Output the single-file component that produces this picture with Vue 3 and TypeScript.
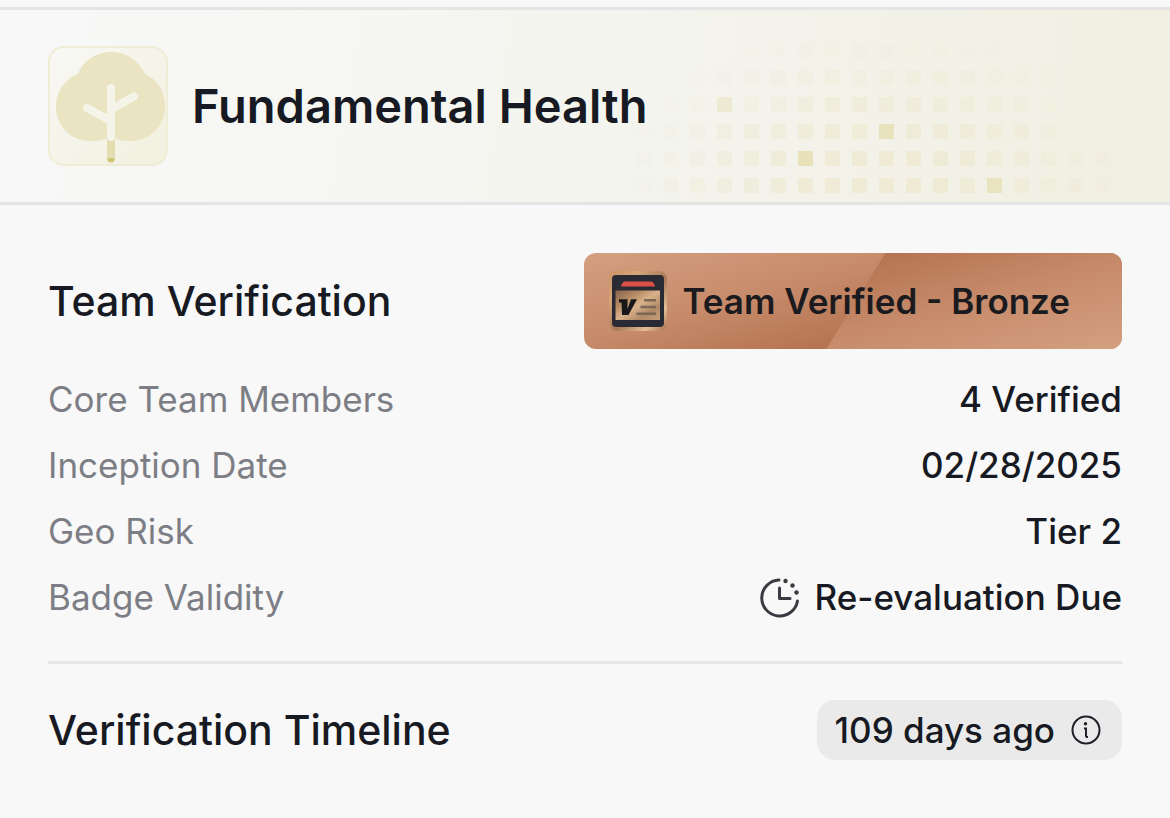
<script setup lang="ts">
interface Row {
  label: string
  value: string
  due?: boolean
}

interface Cell {
  x: number
  y: number
  opacity: number
}

const rows: Row[] = [
  { label: 'Core Team Members', value: '4 Verified' },
  { label: 'Inception Date', value: '02/28/2025' },
  { label: 'Geo Risk', value: 'Tier 2' },
  { label: 'Badge Validity', value: 'Re-evaluation Due', due: true },
]

const columns = 20
const lines = 6
const pitch = 27
const accents: Record<string, number> = { '4,2': 0.5, '10,3': 0.95, '7,4': 1, '14,5': 0.9 }

// Squares fade out from the bottom middle of the pattern.
const cells: Cell[] = []
for (let line = 0; line < lines; line++) {
  for (let column = 0; column < columns; column++) {
    const dx = (column - 9.5) / 9.5
    const dy = (lines - 1 - line) / 6
    const fade = Math.max(0, 1 - Math.sqrt(dx * dx + dy * dy))
    cells.push({
      x: column * pitch,
      y: line * pitch,
      opacity: accents[`${column},${line}`] ?? Math.min(0.4, fade * 0.55),
    })
  }
}
</script>

<template>
  <main class="card">
    <header class="banner">
      <svg class="pattern" width="528" height="150" viewBox="0 0 528 150" aria-hidden="true">
        <rect
          v-for="cell in cells"
          :key="`${cell.x}-${cell.y}`"
          :x="cell.x"
          :y="cell.y"
          width="15"
          height="15"
          fill="#e8e1ba"
          :fill-opacity="cell.opacity"
        />
      </svg>
      <svg class="tree" width="120" height="120" viewBox="0 0 120 120" aria-hidden="true">
        <defs>
          <linearGradient id="tile" x1="0" y1="0" x2="1" y2="1">
            <stop offset="0" stop-color="#f8f8f5" />
            <stop offset="1" stop-color="#f2f0de" />
          </linearGradient>
        </defs>
        <rect x="1" y="1" width="118" height="118" rx="15" fill="url(#tile)" stroke="#f0edd6" stroke-width="2" />
        <path
          d="M63 6C78 6 91 14 97 28C109 33 117 45 117 60C117 80 102 95 83 95C75 95 69 94 63 91C57 94 50 95 42 95C23 95 8 80 8 61C8 46 17 33 30 28C35 15 48 6 63 6Z"
          fill="#eae4c3"
        />
        <path d="M63 92V112" stroke="#e4ddb0" stroke-width="8" stroke-linecap="round" />
        <path d="M59 113Q63 111 67 113Q66 116.500 63 116.500Q60 116.500 59 113Z" fill="#cfc473" />
        <path d="M63 42V91M63 63.500L86 50.500M63 75L39 62" fill="none" stroke="#f5f4e9" stroke-width="8" stroke-linecap="round" />
      </svg>
      <h1 class="title">Fundamental Health</h1>
    </header>

    <section class="section">
      <div class="head">
        <h2 class="heading">Team Verification</h2>
        <div class="badge">
          <svg class="emblem" width="60" height="60" viewBox="0 0 60 60" aria-hidden="true">
            <defs>
              <linearGradient id="rim" x1="0" y1="0" x2="1" y2="1">
                <stop offset="0" stop-color="#c9925f" />
                <stop offset="0.25" stop-color="#d6a77a" />
                <stop offset="0.55" stop-color="#a87858" />
                <stop offset="0.8" stop-color="#e2bc97" />
                <stop offset="1" stop-color="#a97048" />
              </linearGradient>
              <linearGradient id="plate" x1="0" y1="0" x2="1" y2="1">
                <stop offset="0" stop-color="#85644a" />
                <stop offset="0.3" stop-color="#b88d66" />
                <stop offset="0.5" stop-color="#d9b28b" />
                <stop offset="0.75" stop-color="#b08a68" />
                <stop offset="1" stop-color="#c99f7a" />
              </linearGradient>
            </defs>
            <rect x="1" y="0" width="58" height="60" rx="8" fill="url(#rim)" />
            <rect x="4" y="4" width="52" height="52" rx="4" fill="#2a2a34" />
            <path d="M17 10.500H43Q46 11 47 15.500H13Q14 11 17 10.500Z" fill="#dc5147" />
            <path d="M7.500 19.500H52V49H7.500Z" fill="url(#plate)" />
            <path d="M11 28.300H19.500L19.500 38L23 28.300H29L20.500 44H14L13.500 31.500H11Z" fill="#171719" />
            <path d="M36 29.300H48M32.500 36H48M28.500 42.700H48" stroke="#7d6753" stroke-width="2.500" />
          </svg>
          <span class="badge-text">Team Verified - Bronze</span>
        </div>
      </div>

      <dl class="rows">
        <div v-for="row in rows" :key="row.label" class="row">
          <dt>{{ row.label }}</dt>
          <dd>
            <svg v-if="row.due" width="42" height="42" viewBox="0 0 42 42" aria-hidden="true">
              <path d="M20 4A18 18 0 1 0 38.500 25" fill="none" stroke="#3a3b42" stroke-width="3" stroke-linecap="round" />
              <path d="M20.500 12V22.500H31" fill="none" stroke="#3a3b42" stroke-width="3" stroke-linecap="round" stroke-linejoin="round" />
              <circle cx="26.500" cy="5" r="2.200" fill="#3a3b42" />
              <circle cx="33.500" cy="9.500" r="2.200" fill="#3a3b42" />
              <circle cx="37.500" cy="16.500" r="2.200" fill="#3a3b42" />
            </svg>
            {{ row.value }}
          </dd>
        </div>
      </dl>
    </section>

    <section class="section timeline">
      <h2 class="heading">Verification Timeline</h2>
      <div class="pill">
        <span>109 days ago</span>
        <button class="info" type="button" aria-label="More information">
          <svg width="30" height="30" viewBox="0 0 30 30" aria-hidden="true">
            <circle cx="15" cy="15" r="13.500" fill="none" stroke="#1d2027" stroke-width="2" />
            <circle cx="14.500" cy="8.800" r="1.700" fill="#1d2027" />
            <path d="M13 13.500H15V21Q15 22 17 22" fill="none" stroke="#1d2027" stroke-width="2" />
          </svg>
        </button>
      </div>
    </section>
  </main>
</template>

<style>
body {
  margin: 0;
  background: #f8f8f8;
}
</style>

<style scoped>
.card {
  padding-top: 7px;
  color: #171a22;
  font-family: Inter, "Liberation Sans", sans-serif;
  font-size: 35px;
  line-height: 48px;
}

.banner {
  position: relative;
  display: flex;
  align-items: center;
  gap: 24px;
  padding: 36px 48px;
  border-top: 3px solid #e4e4e4;
  border-bottom: 3px solid #e4e4e4;
  background: linear-gradient(100deg, #f8f8f8 0%, #f4f4ee 55%, #f1efe1 100%);
}

.pattern {
  position: absolute;
  right: 33px;
  bottom: 9px;
}

.tree,
.title {
  position: relative;
}

.title,
.heading {
  margin: 0;
}

.title {
  font-size: 47px;
  font-weight: 600;
  line-height: 60px;
}

.heading {
  font-size: 41px;
  font-weight: 500;
  line-height: 54px;
}

.section {
  margin: 0 48px;
}

.head {
  display: flex;
  align-items: center;
  justify-content: space-between;
  padding-top: 48px;
}

.badge {
  position: relative;
  display: flex;
  align-items: center;
  gap: 14px;
  box-sizing: border-box;
  height: 96px;
  padding: 0 52px 0 24px;
  border-radius: 12px;
  overflow: hidden;
  background: linear-gradient(165deg, #d3a080 0%, #c78b6b 36%, #b57350 67%);
  color: #1b1b1f;
  font-weight: 600;
}

.badge::before {
  position: absolute;
  inset: 0;
  background: linear-gradient(165deg, #b57350 33%, #c78b6b 64%, #d3a080 100%);
  clip-path: polygon(56% 0, 100% 0, 100% 100%, 45% 100%);
  content: "";
}

.emblem,
.badge-text {
  position: relative;
}

.rows {
  margin: 0;
  padding: 26px 0 40px;
  border-bottom: 3px solid #e6e6e7;
}

.row {
  display: flex;
  align-items: center;
  justify-content: space-between;
}

.row + .row {
  margin-top: 18px;
}

dt {
  color: #7d7e85;
}

dd {
  display: flex;
  align-items: center;
  gap: 14px;
  margin: 0;
  font-weight: 500;
}

.timeline {
  display: flex;
  align-items: center;
  justify-content: space-between;
  padding: 36px 0;
}

.pill {
  display: flex;
  align-items: center;
  gap: 16px;
  padding: 6px 21px 6px 18px;
  border-radius: 18px;
  background: #eaeaea;
  font-weight: 500;
}

.info {
  display: flex;
  padding: 0;
  border: 0;
  background: none;
  cursor: pointer;
}
</style>
